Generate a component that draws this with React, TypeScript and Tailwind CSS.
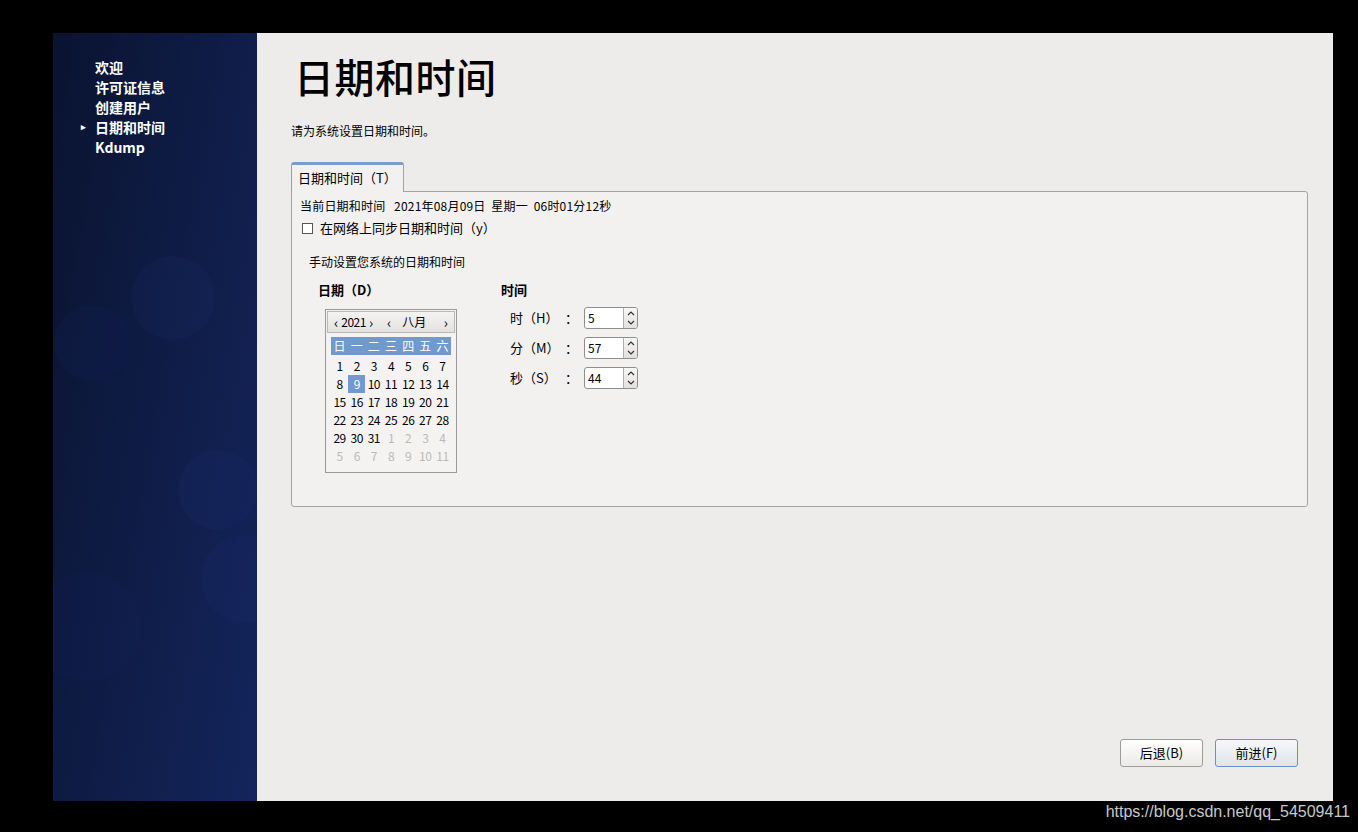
import React from 'react';

const cjk = { fontFamily: '"Noto Sans CJK SC", "Noto Sans", sans-serif' };

const navItems = ['欢迎', '许可证信息', '创建用户', '日期和时间', 'Kdump'];

const Sidebar = () => {
  return (
    <div className="relative w-[204px] h-full overflow-hidden bg-[linear-gradient(100deg,#0a1330_0%,#0f1d48_55%,#13255c_100%)]">
      {/* faint bubbles */}
      <div className="absolute left-[78px] top-[223px] w-[84px] h-[84px] rounded-full bg-[#1a2d6a]/20" />
      <div className="absolute left-[1px] top-[272px] w-[76px] h-[76px] rounded-full bg-[#1a2d6a]/12" />
      <div className="absolute left-[125px] top-[417px] w-[80px] h-[80px] rounded-full bg-[#1a2d6a]/25" />
      <div className="absolute left-[148px] top-[502px] w-[88px] h-[88px] rounded-full bg-[#1a2d6a]/25" />
      <div className="absolute left-[-22px] top-[539px] w-[110px] h-[110px] rounded-full bg-[#1a2d6a]/12" />

      <ul className="relative pt-[24px] pl-[42px] flex flex-col" style={cjk}>
        {navItems.map((item, i) => (
          <li key={item} className="relative h-[20px] leading-[20px] text-[14px] font-bold text-white">
            {i === 3 && (
              <span className="absolute left-[-14px] top-0 text-[9px]">▸</span>
            )}
            {item}
          </li>
        ))}
      </ul>
    </div>
  );
};

const days: { d: number; muted?: boolean; sel?: boolean }[][] = [
  [1, 2, 3, 4, 5, 6, 7].map((d) => ({ d })),
  [8, 9, 10, 11, 12, 13, 14].map((d) => ({ d, sel: d === 9 })),
  [15, 16, 17, 18, 19, 20, 21].map((d) => ({ d })),
  [22, 23, 24, 25, 26, 27, 28].map((d) => ({ d })),
  [
    { d: 29 },
    { d: 30 },
    { d: 31 },
    { d: 1, muted: true },
    { d: 2, muted: true },
    { d: 3, muted: true },
    { d: 4, muted: true },
  ],
  [5, 6, 7, 8, 9, 10, 11].map((d) => ({ d, muted: true })),
];

const Calendar = () => {
  return (
    <div className="w-[132px] h-[164px] border border-[#9a9a9a] bg-[#f4f3f2] p-[1px]">
      <div className="h-[22px] flex items-center px-[6px] border border-[#b8b8b8] bg-[linear-gradient(#f4f3f2,#e4e2df)] text-[12px] text-black">
        <span className="text-[14px] leading-[14px]">‹</span>
        <span className="ml-[3px] tracking-[-0.5px]">2021</span>
        <span className="ml-[3px] text-[14px] leading-[14px]">›</span>
        <span className="ml-[14px] text-[14px] leading-[14px]">‹</span>
        <span className="ml-[11px]">八月</span>
        <span className="ml-auto text-[14px] leading-[14px]">›</span>
      </div>
      <div className="mx-[4px] mt-[4px] grid grid-cols-7 bg-[#7099cd] text-white text-[12px] leading-[18px] text-center">
        {['日', '一', '二', '三', '四', '五', '六'].map((w) => (
          <span key={w}>{w}</span>
        ))}
      </div>
      <div className="mx-[4px] mt-[2px] grid grid-cols-7 text-[12px] leading-[18px] text-center tracking-[-0.5px]">
        {days.flat().map((c, i) => (
          <span
            key={i}
            className={
              c.sel
                ? 'bg-[#7099cd] text-white'
                : c.muted
                ? 'text-[#b9b9b9]'
                : 'text-black'
            }
          >
            {c.d}
          </span>
        ))}
      </div>
    </div>
  );
};

const Spin = ({ value }: { value: string }) => {
  return (
    <div className="flex w-[54px] h-[22px] border border-[#8e8e8e] rounded-[3px] bg-white overflow-hidden">
      <div className="flex-1 pl-[3px] text-[12px] leading-[20px] text-black">{value}</div>
      <div className="w-[14px] flex flex-col border-l border-[#b0b0b0] bg-[linear-gradient(#f8f8f8,#e2e0dd)]">
        <svg viewBox="0 0 14 10" className="w-[14px] h-[10px]">
          <path d="M4 7 L7 4 L10 7" fill="none" stroke="#333" strokeWidth="1.2" />
        </svg>
        <svg viewBox="0 0 14 10" className="w-[14px] h-[10px]">
          <path d="M4 3 L7 6 L10 3" fill="none" stroke="#333" strokeWidth="1.2" />
        </svg>
      </div>
    </div>
  );
};

const timeRows = [
  { label: '时（H）', value: '5' },
  { label: '分（M）', value: '57' },
  { label: '秒（S）', value: '44' },
];

const Content = () => {
  return (
    <div className="flex-1 h-full bg-[#edecea] flex flex-col pl-[34px] pr-[25px]" style={cjk}>
      <h1 className="mt-[15px] ml-[3px] text-[40px] leading-[56px] font-medium text-black tracking-[0.5px]">日期和时间</h1>
      <p className="mt-[18px] text-[12px] text-black leading-[18px]">请为系统设置日期和时间。</p>

      <div className="mt-[21px] flex">
        <div className="w-[113px] h-[30px] border border-[#a0a0a0] border-b-0 border-t-[3px] border-t-[#7a9cce] rounded-t-[3px] bg-[#f2f1f0] text-[13px] text-black pl-[6px] leading-[26px] relative top-[1px]">
          日期和时间（T）
        </div>
      </div>

      <div className="h-[316px] border border-[#a4a4a4] rounded-b-[3px] rounded-tr-[3px] bg-[#f2f1f0] pl-[8px] pt-[6px] text-[12px] text-black">
        <p className="leading-[16px] tracking-[0.2px]">
          当前日期和时间&nbsp;&nbsp;&nbsp;2021年08月09日&nbsp;&nbsp;星期一&nbsp;&nbsp;06时01分12秒
        </p>
        <label className="mt-[6px] flex items-center gap-[7px] leading-[16px] text-[13px]">
          <span className="ml-[2px] w-[11px] h-[11px] border border-[#555] bg-white" />
          在网络上同步日期和时间（y）
        </label>
        <p className="mt-[18px] ml-[9px] leading-[16px]">手动设置您系统的日期和时间</p>

        <div className="mt-[12px] flex">
          <div className="ml-[18px] w-[183px] flex flex-col">
            <span className="text-[13px] font-bold leading-[16px]">日期（D）</span>
            <div className="mt-[11px] ml-[7px]">
              <Calendar />
            </div>
          </div>
          <div className="flex flex-col">
            <span className="text-[13px] font-bold leading-[16px]">时间</span>
            <div className="mt-[9px] flex flex-col gap-[8px]">
              {timeRows.map((r) => (
                <div key={r.label} className="flex items-center">
                  <span className="w-[64px] pl-[9px] text-[13px]">{r.label}</span>
                  <span className="w-[19px] text-[13px]">：</span>
                  <Spin value={r.value} />
                </div>
              ))}
            </div>
          </div>
        </div>
      </div>

      <div className="mt-auto mb-[34px] flex justify-end gap-[12px]">
        <button className="w-[83px] h-[28px] border border-[#9c9c9c] rounded-[3px] bg-[linear-gradient(#ffffff,#eceae7)] text-[13px] text-black">
          后退(B)
        </button>
        <button className="w-[83px] h-[28px] border border-[#6f8fbf] rounded-[3px] bg-[linear-gradient(#f6f8fb,#dfe4ec)] text-[13px] text-black mr-[10px]">
          前进(F)
        </button>
      </div>
    </div>
  );
};

export default function App() {
  return (
    <div className="relative w-[1358px] h-[832px] bg-black pl-[53px] pt-[33px]">
      <div className="flex w-[1280px] h-[768px]">
        <Sidebar />
        <Content />
      </div>
      <span
        className="absolute right-[8px] bottom-[8px] text-[16px] text-[#c8c8c8]"
        style={{ fontFamily: '"Liberation Sans", Arial, sans-serif' }}
      >
        https://blog.csdn.net/qq_54509411
      </span>
    </div>
  );
}
